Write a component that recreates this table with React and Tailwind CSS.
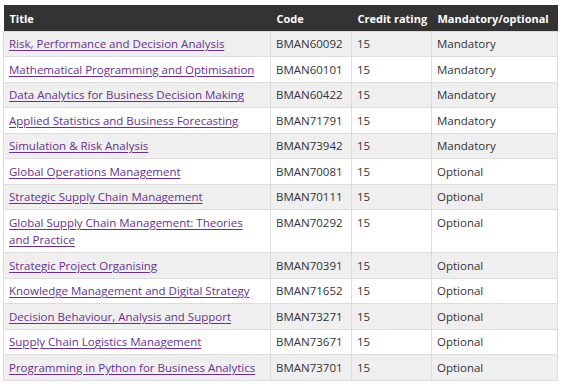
import React from "react";

const rows = [
  ["Risk, Performance and Decision Analysis", "BMAN60092", "15", "Mandatory"],
  ["Mathematical Programming and Optimisation", "BMAN60101", "15", "Mandatory"],
  ["Data Analytics for Business Decision Making", "BMAN60422", "15", "Mandatory"],
  ["Applied Statistics and Business Forecasting", "BMAN71791", "15", "Mandatory"],
  ["Simulation & Risk Analysis", "BMAN73942", "15", "Mandatory"],
  ["Global Operations Management", "BMAN70081", "15", "Optional"],
  ["Strategic Supply Chain Management", "BMAN70111", "15", "Optional"],
  ["Global Supply Chain Management: Theories and Practice", "BMAN70292", "15", "Optional"],
  ["Strategic Project Organising", "BMAN70391", "15", "Optional"],
  ["Knowledge Management and Digital Strategy", "BMAN71652", "15", "Optional"],
  ["Decision Behaviour, Analysis and Support", "BMAN73271", "15", "Optional"],
  ["Supply Chain Logistics Management", "BMAN73671", "15", "Optional"],
  ["Programming in Python for Business Analytics", "BMAN73701", "15", "Optional"],
];

export default function App() {
  return (
    <div className="w-[562px] h-[385px] bg-white pl-[3px] pt-[5px]" style={{ fontFamily: '"Open Sans", sans-serif' }}>
      <table className="table-fixed border-collapse text-[11.5px] leading-[17.5px] text-[#333]" style={{ width: 554 }}>
        <colgroup>
          <col className="w-[267px]" />
          <col className="w-[81px]" />
          <col className="w-[80px]" />
          <col className="w-[126px]" />
        </colgroup>
        <thead>
          <tr className="bg-[#333333] text-white text-left text-[11px]">
            <th className="px-[6px] pt-[5px] pb-[3px] h-[26px] font-bold whitespace-nowrap">Title</th>
            <th className="px-[6px] pt-[5px] pb-[3px] font-bold whitespace-nowrap">Code</th>
            <th className="px-[6px] pt-[5px] pb-[3px] font-bold whitespace-nowrap">Credit rating</th>
            <th className="px-[6px] pt-[5px] pb-[3px] font-bold whitespace-nowrap">Mandatory/optional</th>
          </tr>
        </thead>
        <tbody>
          {rows.map((r, i) => (
            <tr key={i} className={i % 2 === 0 ? "bg-[#efefef]" : "bg-white"}>
              <td className="border border-[#dcdcdc] px-[5px] py-[3.5px] align-top">
                <a href="#" className="text-[#68318d] underline underline-offset-[2px] decoration-[1px]">{r[0]}</a>
              </td>
              <td className="border border-[#dcdcdc] px-[5px] py-[3.5px] align-top">{r[1]}</td>
              <td className="border border-[#dcdcdc] px-[5px] py-[3.5px] align-top">{r[2]}</td>
              <td className="border border-[#dcdcdc] px-[5px] py-[3.5px] align-top">{r[3]}</td>
            </tr>
          ))}
        </tbody>
      </table>
    </div>
  );
}
